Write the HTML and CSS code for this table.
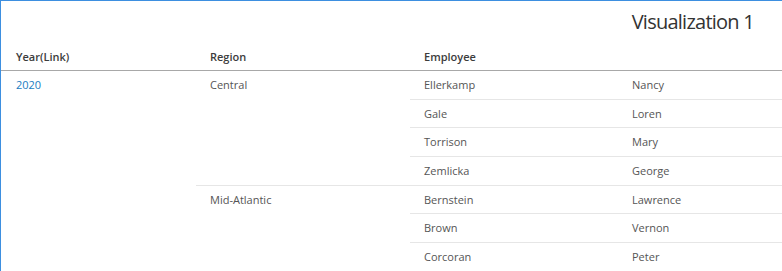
FILE: index.html
```html
<!DOCTYPE html>
<html>
<head>
<meta charset="utf-8">
<link rel="stylesheet" href="styles.css">
</head>
<body>
<div class="panel">
  <div class="title-bar"><h1 class="title">Visualization 1</h1></div>
  <table class="grid">
    <colgroup>
      <col class="c-year"><col class="c-region"><col class="c-last"><col class="c-first">
    </colgroup>
    <thead>
      <tr><th>Year(Link)</th><th>Region</th><th>Employee</th><th></th></tr>
    </thead>
    <tbody>
      <tr>
        <td class="year" rowspan="7"><a href="#" class="link">2020</a></td>
        <td class="region sep" rowspan="4">Central</td>
        <td class="emp sep">Ellerkamp</td><td class="emp sep">Nancy</td>
      </tr>
      <tr><td class="emp sep">Gale</td><td class="emp sep">Loren</td></tr>
      <tr><td class="emp sep">Torrison</td><td class="emp sep">Mary</td></tr>
      <tr><td class="emp sep">Zemlicka</td><td class="emp sep">George</td></tr>
      <tr>
        <td class="region" rowspan="3">Mid-Atlantic</td>
        <td class="emp sep">Bernstein</td><td class="emp sep">Lawrence</td>
      </tr>
      <tr><td class="emp sep">Brown</td><td class="emp sep">Vernon</td></tr>
      <tr><td class="emp">Corcoran</td><td class="emp">Peter</td></tr>
    </tbody>
  </table>
</div>
</body>
</html>
```
FILE: styles.css
```css
html, body {
  margin: 0;
  padding: 0;
  background: #fff;
}
body {
  font-family: "Open Sans", "Noto Sans", sans-serif;
  font-size: 11px;
  color: #555;
}
.panel {
  border-top: 1px solid #3d8fe0;
  border-left: 1px solid #3d8fe0;
  height: 270px;
  overflow: hidden;
}
.title-bar {
  display: flex;
  justify-content: flex-end;
  height: 41px;
  padding-right: 28px;
}
.title {
  margin: 0;
  padding-top: 7px;
  font-size: 20px;
  font-weight: 400;
  line-height: 27px;
  letter-spacing: -0.75px;
  color: #333;
}
.grid {
  width: 781px;
  border-collapse: collapse;
  table-layout: fixed;
}
.c-year { width: 195px; }
.c-region { width: 214px; }
.c-last { width: 208px; }
.c-first { width: 164px; }
.grid th {
  text-align: left;
  font-weight: 600;
  color: #3c3c3c;
  height: 28px;
  padding: 0 14px;
  vertical-align: middle;
  border-bottom: 1px solid #a8a8a8;
}
.grid th:first-child { padding-left: 15px; }
.grid td {
  padding: 0 14px;
  line-height: 27.67px;
  vertical-align: top;
  white-space: nowrap;
}
.grid td.year { padding-left: 15px; }
.grid td.sep {
  border-bottom: 1px solid #e6e6e6;
}
.link {
  color: #1a7cc1;
  text-decoration: none;
}
```
